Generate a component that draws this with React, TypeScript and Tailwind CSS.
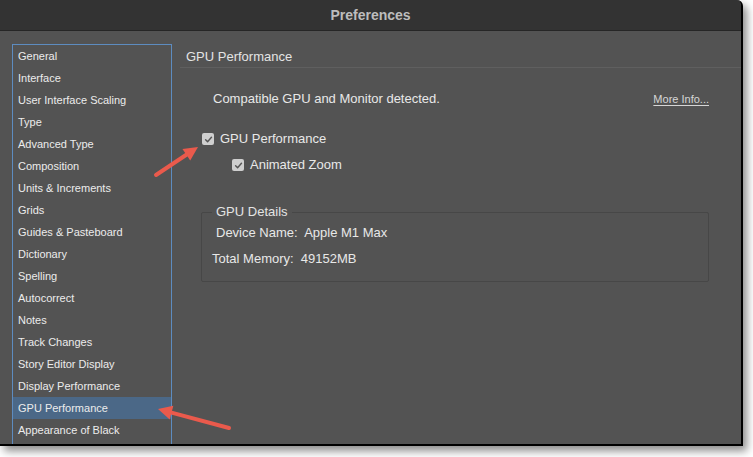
import React from 'react';

const items = [
  'General',
  'Interface',
  'User Interface Scaling',
  'Type',
  'Advanced Type',
  'Composition',
  'Units & Increments',
  'Grids',
  'Guides & Pasteboard',
  'Dictionary',
  'Spelling',
  'Autocorrect',
  'Notes',
  'Track Changes',
  'Story Editor Display',
  'Display Performance',
  'GPU Performance',
  'Appearance of Black',
];

function Check() {
  return (
    <span className="flex h-[12px] w-[12px] items-center justify-center rounded-[2px] bg-[#cfcfcf]">
      <svg width="9" height="9" viewBox="0 0 10 10">
        <path d="M1.8 5.2 L4 7.4 L8.3 2.6" fill="none" stroke="#555" strokeWidth="1.6" strokeLinecap="round" strokeLinejoin="round" />
      </svg>
    </span>
  );
}

function Arrow({ x1, y1, x2, y2 }: { x1: number; y1: number; x2: number; y2: number }) {
  const ang = Math.atan2(y2 - y1, x2 - x1);
  const len = 14;
  const w = 7;
  const bx = x2 - Math.cos(ang) * len;
  const by = y2 - Math.sin(ang) * len;
  const px = -Math.sin(ang) * w;
  const py = Math.cos(ang) * w;
  return (
    <g>
      <line x1={x1} y1={y1} x2={bx} y2={by} stroke="#ea5a4c" strokeWidth="4" strokeLinecap="round" />
      <polygon points={`${x2},${y2} ${bx + px},${by + py} ${bx - px},${by - py}`} fill="#ea5a4c" />
    </g>
  );
}

export default function App() {
  return (
    <div className="relative h-[457px] w-[753px] overflow-hidden bg-white font-['Liberation_Sans',Arial,sans-serif]">
      <div className="flex h-[446px] w-[743px] flex-col overflow-hidden rounded-tr-[6px] border-r-2 border-b-2 border-black bg-[#535353] shadow-[4px_5px_8px_rgba(0,0,0,0.45)]">
        {/* title bar */}
        <div className="flex h-[31px] shrink-0 items-center justify-center border-b border-[#262626] bg-[#333333] pt-[1px]">
          <span className="text-[14px] font-bold text-[#bdbdbd]">Preferences</span>
        </div>

        <div className="flex min-h-0 flex-1 pl-[12px] pt-[13px]">
          {/* sidebar */}
          <div className="w-[160px] shrink-0 border-x border-t border-[#5d8cc0]">
            {items.map((it) => (
              <div
                key={it}
                className={`flex h-[22px] items-center pl-[5px] text-[11px] text-[#ececec] ${
                  it === 'GPU Performance' ? 'bg-[#4b6887]' : ''
                }`}
              >
                {it}
              </div>
            ))}
          </div>

          {/* main panel */}
          <div className="flex min-w-0 flex-1 flex-col pl-[8px] pt-[2px] text-[13px] leading-[16px] text-[#e8e8e8]">
            <div className="flex h-[22px] items-center border-b border-[#5f5f5f] pl-[6px] text-[#e4e4e4]">
              GPU Performance
            </div>

            <div className="mt-[23px] flex items-center justify-between pl-[33px] pr-[32px]">
              <span>Compatible GPU and Monitor detected.</span>
              <span className="text-[11px] text-[#d6d6d6] underline underline-offset-2">More Info...</span>
            </div>

            <div className="mt-[24px] flex items-center gap-[6px] pl-[22px]">
              <Check />
              <span>GPU Performance</span>
            </div>
            <div className="mt-[10px] flex items-center gap-[6px] pl-[52px]">
              <Check />
              <span>Animated Zoom</span>
            </div>

            <div className="relative ml-[21px] mr-[32px] mt-[39px] h-[70px] rounded-[2px] border border-[#474747]">
              <span className="absolute -top-[9px] left-[10px] bg-[#535353] px-[4px] text-[#e4e4e4]">
                GPU Details
              </span>
              <div className="pl-[14px] pt-[12px]">Device Name:&nbsp; Apple M1 Max</div>
              <div className="pl-[10px] pt-[10px]">Total Memory:&nbsp; 49152MB</div>
            </div>
          </div>
        </div>
      </div>

      {/* annotation arrows */}
      <svg className="pointer-events-none absolute left-0 top-0" width="753" height="457">
        <Arrow x1={156} y1={175} x2={198} y2={147} />
        <Arrow x1={229} y1={428} x2={158} y2={409} />
      </svg>
    </div>
  );
}
